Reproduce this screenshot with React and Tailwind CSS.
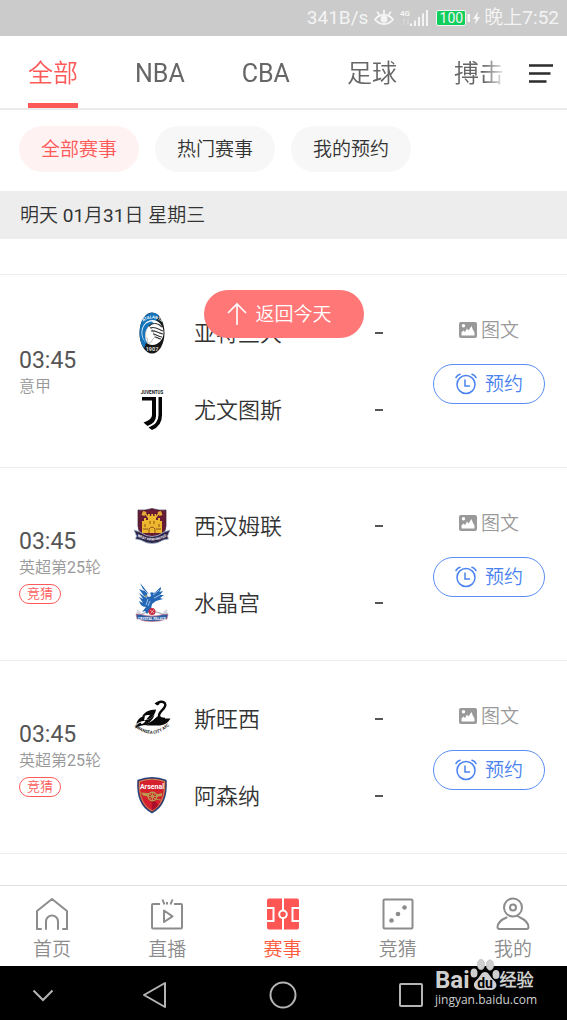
import React from 'react';

function StatusBar() {
  return (
    <header className="flex h-9 shrink-0 items-center justify-end bg-[#cbcbcb] pr-2 text-[19px] leading-6 text-[#f4f4f4]">
      <span>341B/s</span>
      <svg className="ml-1.5 h-5 w-5" viewBox="0 0 20 20" fill="none" stroke="currentColor" strokeWidth="1.8" strokeLinecap="round" aria-hidden="true">
        <path d="M1 11.5C5.5 5.5 14.5 5.5 19 11.5C14.5 17.5 5.5 17.5 1 11.5Z" />
        <circle cx="10" cy="11.2" r="3.4" fill="currentColor" stroke="none" />
        <path d="M10 2.5v3.5M3.5 4.2l2 3M16.5 4.2l-2 3" />
      </svg>
      <svg className="ml-1.5 h-5 w-7" viewBox="0 0 28 20" fill="currentColor" aria-hidden="true">
        <text x="0" y="8" fontSize="8" fontWeight="700">4G</text>
        <path d="M2.5 12l1.5-1.5 1.5 1.500h-1v5h-1v-5zM6.500 15.500h1v-5h1v5h1l-1.500 1.500z" opacity=".4" />
        <path d="M10 15.500h2v2.500h-2zM14 12.500h2v5.500h-2zM18 9h2v9h-2zM22 5.500h2V18h-2zM26 2h2v16h-2z" />
      </svg>
      <span className="ml-2 flex h-4 w-[30px] items-center justify-center rounded-xs border border-[#f4f4f4] bg-[#11cf5c] text-sm">100</span>
      <svg className="h-4 w-4" viewBox="0 0 16 16" fill="currentColor" aria-hidden="true">
        <path d="M1.500 4h2.500v8H1.500zM12 1.500L7 9h2.800L9 14.500 14 7h-2.800z" />
      </svg>
      <span className="ml-0.5">晚上7:52</span>
    </header>
  );
}

const tabs = ['全部', 'NBA', 'CBA', '足球', '搏击'];

function Tabs() {
  return (
    <nav className="flex h-[74px] shrink-0 border-b-2 border-[#ebebeb]" aria-label="分类">
      <div className="flex min-w-0 flex-1 gap-[57px] overflow-hidden pl-7 [mask-image:linear-gradient(to_right,black_calc(100%-32px),transparent_calc(100%-8px))]">
        {tabs.map((tab, i) => (
          <button
            key={tab}
            className={
              i === 0
                ? 'shrink-0 border-b-[5px] border-[#fe5959] pt-2 text-[25px] leading-8 text-[#fe5959]'
                : 'shrink-0 border-b-[5px] border-transparent pt-2 text-[25px] leading-8 text-[#666]'
            }
          >
            {tab}
          </button>
        ))}
      </div>
      <button className="flex w-[52px] shrink-0 items-center justify-center pt-1" aria-label="菜单">
        <svg className="h-6 w-6" viewBox="0 0 24 24" stroke="#2c2c2c" strokeWidth="2.300" aria-hidden="true">
          <path d="M0 3.500h24M0 11.500h21.500M0 19.500h17.500" />
        </svg>
      </button>
    </nav>
  );
}

const filters = ['全部赛事', '热门赛事', '我的预约'];

function Filters() {
  return (
    <div className="flex h-[81px] shrink-0 items-center gap-4 px-[19px] pb-[3px]">
      {filters.map((filter, i) => (
        <button
          key={filter}
          className={
            i === 0
              ? 'h-[46px] w-[120px] rounded-full bg-[#fff2f2] pt-0.5 text-[19px] leading-7 text-[#fe5959]'
              : 'h-[46px] w-[120px] rounded-full bg-[#f7f7f7] pt-0.5 text-[19px] leading-7 text-[#333]'
          }
        >
          {filter}
        </button>
      ))}
    </div>
  );
}

function AtalantaCrest() {
  return (
    <svg className="h-11 w-10" viewBox="0 0 40 44" aria-hidden="true">
      <ellipse cx="20" cy="22" rx="12.500" ry="20.500" fill="#171717" />
      <path d="M27 4.500C22 0 15 .8 10.500 9C6 18 7 31 12 37.500L18 22Z" fill="#1475bd" />
      <ellipse cx="20.500" cy="21.500" rx="11" ry="12.500" fill="#fff" />
      <path d="M20 10.500C8 11 8 28 15.500 32.500C10.500 25 13 15 22 12.500Z" fill="#1475bd" />
      <path d="M17 15C13 19 14 23 13 26l2.500 1.500L15 31c2.500 2 5 1 5-2l3-3-3-8Z" fill="#fff" stroke="#777" strokeWidth=".5" />
      <path d="M17 15c4-4 9-3 13 1M18 17c5-2 8 1 13 3M19 20c4-1 7 2 12 3M21 23c3 0 5 3 9 3M23 26c2 0 3 2 6 2" fill="none" stroke="#333" strokeWidth="1.100" />
      <path id="atalanta-arc" d="M9 12.500Q20 2 32 13" fill="none" />
      <text fontSize="4" fontWeight="700" fill="#fff" textAnchor="middle"><textPath href="#atalanta-arc" startOffset="50%">ATALANTA</textPath></text>
      <text x="20" y="39.500" textAnchor="middle" fontSize="5.500" fontWeight="700" fill="#ddd">1907</text>
    </svg>
  );
}

function JuventusCrest() {
  return (
    <svg className="h-11 w-10" viewBox="0 0 40 44" aria-hidden="true">
      <text x="20" y="6" textAnchor="middle" fontSize="4.500" fontWeight="700" fill="#111">JUVENTUS</text>
      <path d="M10 9h14v19q0 7-8.500 10l-4-3.500Q20 32 20 27V12.500H10Z" fill="#050505" />
      <path d="M26.500 9H30v18q0 11-10 15l-3.500-2.500Q26.500 36 26.500 27Z" fill="#050505" />
    </svg>
  );
}

function WestHamCrest() {
  return (
    <svg className="h-11 w-10" viewBox="0 0 40 44" aria-hidden="true">
      <path d="M6 6Q13 7 20 4.500Q27 7 34 6v16q0 9-14 15Q6 31 6 22Z" fill="#671b34" stroke="#35213c" strokeWidth=".7" />
      <path d="M12 8l16 20M28 8L12 28" stroke="#e4ad35" strokeWidth="1.500" />
      <path d="M11 7l3.500 1-2 4-3-1ZM29 7l-3.500 1 2 4 3-1Z" fill="#e4ad35" />
      <path d="M10 29V17h2v-3h2v2h2v-6h1.800v2h1.500v-2h1.800v2h1.500v-2H24v6h2v-2h2v3h2v12Z" fill="#edb82d" />
      <path d="M17 29v-4q3-4 6 0v4M13 20v3M27 20v3M18 17v3M22 17v3M11 25h5M24 25h5" fill="none" stroke="#875022" strokeWidth="1" />
      <path d="M2 26l6 2q12 9 24 0l6-2-2.500 6 1 3-5 1q-11.500 7-23 0l-5-1 1-3Z" fill="#302649" stroke="#a0b9ce" strokeWidth=".8" />
      <path id="westham-arc" d="M2 30Q20 43 38 30" fill="none" />
      <text fontSize="3.500" fontWeight="700" fill="#fff" textAnchor="middle"><textPath href="#westham-arc" startOffset="50%">WEST HAM UNITED</textPath></text>
    </svg>
  );
}

function PalaceCrest() {
  return (
    <svg className="h-11 w-10" viewBox="0 0 40 44" aria-hidden="true">
      <path d="M5 28l3 2 2 4h20l2-4 3-2 1 8H4Z" fill="#d7dce2" />
      <path d="M8 34q12-7 24 0" fill="none" stroke="#afb8c5" strokeWidth="1.500" />
      <path d="M8 2c4 4 6 8 9 11q2-3 5-1c2-1 5-5 7-6 0 3-1 4-2 5l4-1-3 4 4 0-4 3 3 1-7 2-4 3-1 5-4 5-2-3-3 1 4-5c-4 0-6-3-7-6l4 2-4-6 4 2-4-6 5 3-5-7 5 2Z" fill="#2367b5" />
      <path d="M10 7l7 7M9 13l6 4M27 9l-6 5M28 14l-6 3M16 18l-2 6M18 20l-2 5" stroke="#a9c9ec" strokeWidth=".9" />
      <circle cx="17" cy="14" r="2" fill="#eef3f9" />
      <path d="M15 14l-2.500 1 2 1Z" fill="#e9ae33" />
      <circle cx="20" cy="30.500" r="3.500" fill="#c92b3d" />
      <path d="M18 29l4 3M22 28.500l-3.500 4" stroke="#f4c7ca" strokeWidth=".7" />
      <path d="M4 33l5 .5q11 3.500 22 0l5-.5-1 5q-15 5-30 0Z" fill="#285ea8" stroke="#df6e79" strokeWidth=".6" />
      <text x="20" y="38.600" textAnchor="middle" fontSize="3.400" fontWeight="700" fill="#fff">CRYSTAL PALACE</text>
    </svg>
  );
}

function SwanseaCrest() {
  return (
    <svg className="h-11 w-10" viewBox="0 0 40 44" aria-hidden="true">
      <path d="M25 7.500C26 4.500 31 3.500 33 6.500C35.500 11 26.500 14 27 19C27.300 21 29.500 22 33 22" fill="none" stroke="#080808" strokeWidth="2.400" />
      <path d="M22.500 6.500l3-2 2 2.500-2 1.500Z" fill="#080808" />
      <path d="M26 19c1 2 4 2.500 12.500 2.500C36 26 32 28.500 26 28.500H13.500c4-1 5.500-2.500 7.500-5Z" fill="#080808" />
      <path d="M24 12.500C17 12.500 11.500 15.500 10 20c3-2 6-2.200 8-2-1.500 2-2.500 3-4 4.500 5 0 9-4 10-10Z" fill="#080808" />
      <path d="M13 18.500C8 20 5 23 4.500 27c3-2.500 6-3 9-3-1 1.500-2 2.500-4 3.500C15 27.500 21 24 22.500 17.500 20 21 16.500 23 12 23.500Z" fill="#080808" />
      <path d="M8.500 25.500C5 27 3.500 29 3.500 31.500c3-3 7-3.500 11-3.500 5 0 9-3.500 10.500-8.500-4 5-9 7-15.500 7.500Z" fill="#080808" />
      <path id="swansea-arc" d="M0 27Q20 47 40 26" fill="none" />
      <text fontSize="4.300" fontWeight="700" fill="#222" textAnchor="middle"><textPath href="#swansea-arc" startOffset="50%">SWANSEA CITY AFC</textPath></text>
    </svg>
  );
}

function ArsenalCrest() {
  return (
    <svg className="h-11 w-10" viewBox="0 0 40 44" aria-hidden="true">
      <path d="M6 6.500Q20 1 34 6.500C35 22 31 33 20 38.500C9 33 5 22 6 6.500Z" fill="#d4212d" stroke="#244778" strokeWidth="1.400" />
      <path d="M7.500 7.500Q20 3 32.500 7.500C33 21 30 31 20 36.800C10 31 7 21 7.500 7.500Z" fill="none" stroke="#c5a567" strokeWidth=".8" />
      <path d="M19.500 24l7 7q-3 4-6.500 5.500Z" fill="#a90f2a" />
      <path d="M9 18.500l17 1.500 4-1v3l-10 1.500-9-2Z" fill="#b99a4e" />
      <circle cx="20.500" cy="22.500" r="4.300" fill="#cf2730" stroke="#b99a4e" strokeWidth="1.400" />
      <path d="M16.500 22.500h8M20.500 18.500v8M17.500 19.500l6 6M23.500 19.500l-6 6M23 25l6 1" stroke="#b99a4e" strokeWidth=".9" />
      <text x="20" y="14.500" textAnchor="middle" fontSize="7" fontWeight="700" fill="#fff">Arsenal</text>
    </svg>
  );
}

const matches = [
  { time: '03:45', league: '意甲', guess: false, teams: [['亚特兰大', AtalantaCrest], ['尤文图斯', JuventusCrest]] },
  { time: '03:45', league: '英超第25轮', guess: true, teams: [['西汉姆联', WestHamCrest], ['水晶宫', PalaceCrest]] },
  { time: '03:45', league: '英超第25轮', guess: true, teams: [['斯旺西', SwanseaCrest], ['阿森纳', ArsenalCrest]] },
];

function Match({ match }) {
  return (
    <li className="flex items-center border-t border-[#ececec] py-[19px] pr-[22px] pl-[19px]">
      <div className="flex w-[113px] shrink-0 flex-col items-start pt-1">
        <span className="text-[23px] leading-7 text-[#555]">{match.time}</span>
        <span className="text-base leading-6 text-[#999]">{match.league}</span>
        {match.guess && (
          <span className="mt-1 flex h-5 w-[42px] items-center justify-center rounded-full border border-[#fe5959] text-[13px] leading-4 text-[#fe5959]">竞猜</span>
        )}
      </div>
      <div className="min-w-0 flex-1">
        {match.teams.map(([name, Crest]) => (
          <div key={name} className="flex h-[77px] items-center">
            <Crest />
            <span className="ml-[22px] flex-1 pt-0.5 text-[22px] leading-8 text-[#333]">{name}</span>
            <span className="mr-[50px] h-0.5 w-2 bg-[#555]" role="img" aria-label="未开赛" />
          </div>
        ))}
      </div>
      <div className="flex w-28 shrink-0 flex-col items-center gap-5 pb-5">
        <a href="#news" className="flex items-center gap-1 text-[19px] leading-[26px] text-[#999]">
          <svg className="h-[18px] w-[18px]" viewBox="0 0 18 18" aria-hidden="true">
            <rect y="0" width="18" height="16" rx="2" fill="#999" />
            <circle cx="4.500" cy="3.800" r="1.700" fill="#fff" />
            <path d="M2.500 13.500v-3l2-2 1.500 1.500 2-3.500 1.500 2 3-4.500 1.500 4 1.500 2.500v3Z" fill="#fff" />
          </svg>
          图文
        </a>
        <button className="flex h-10 w-full items-center justify-center gap-2 rounded-full border border-[#5a8df5] text-[19px] leading-6 text-[#4a82f0]">
          <svg className="h-[22px] w-[22px]" viewBox="0 0 22 22" fill="none" stroke="currentColor" strokeWidth="1.500" strokeLinecap="round" aria-hidden="true">
            <circle cx="11" cy="11.500" r="9" />
            <path d="M10 7v6h4.500M1 4.500Q2.500 2 5 1.200M21 4.500Q19.500 2 17 1.200" />
          </svg>
          <span className="pt-0.5">预约</span>
        </button>
      </div>
    </li>
  );
}

const HomeIcon = () => (
  <svg className="h-9 w-9" viewBox="0 0 36 36" fill="none" stroke="currentColor" strokeWidth="2" strokeLinejoin="round" strokeLinecap="round" aria-hidden="true">
    <path d="M7 33H3V15L18 3l15 12v18h-4M12 33V25.500a6 6 0 0 1 12 0V33" />
  </svg>
);
const LiveIcon = () => (
  <svg className="h-9 w-9" viewBox="0 0 36 36" fill="none" stroke="currentColor" strokeWidth="2" strokeLinejoin="round" aria-hidden="true">
    <path d="M11 8H4q-1 0-1 1v22q0 1.500 1 1.500h28q1 0 1-1.500V9q0-1-1-1h-7M13.500 3.500l2 5M18 6v2.500M23.500 3.500l-2 5M15 14.500v11.500l8.500-5.700Z" />
  </svg>
);
const MatchIcon = () => (
  <svg className="h-9 w-9" viewBox="0 0 36 36" fill="none" aria-hidden="true">
    <rect x="2" y="2.500" width="32" height="31" rx="2" fill="#fe5555" />
    <path d="M18 2v12.500M18 22v12M2 12h6.500v13H2M34 12h-6.500v13H34" stroke="#fff" strokeWidth="2" />
    <circle cx="18" cy="18.300" r="3.800" stroke="#fff" strokeWidth="2" />
  </svg>
);
const GuessIcon = () => (
  <svg className="h-9 w-9" viewBox="0 0 36 36" fill="none" stroke="currentColor" strokeWidth="2" aria-hidden="true">
    <rect x="3.500" y="3.500" width="29" height="29" rx="1" />
    <g fill="currentColor" stroke="none"><circle cx="11.500" cy="24.500" r="2.300" /><circle cx="18" cy="18" r="2.300" /><circle cx="24.500" cy="11.500" r="2.300" /></g>
  </svg>
);
const MeIcon = () => (
  <svg className="h-9 w-9" viewBox="0 0 36 36" fill="none" stroke="currentColor" strokeWidth="2" strokeLinecap="round" aria-hidden="true">
    <circle cx="18" cy="11.500" r="9" />
    <circle cx="18" cy="11.500" r="3" />
    <path d="M11.500 21.500Q3 25 2.500 31q0 2 2 2h27q2 0 2-2Q33 25 25 21.500q-2-1.500-3-1.500" />
  </svg>
);

const navItems = [
  ['首页', HomeIcon],
  ['直播', LiveIcon],
  ['赛事', MatchIcon],
  ['竞猜', GuessIcon],
  ['我的', MeIcon],
];

function BottomNav() {
  return (
    <nav className="flex h-[81px] shrink-0 justify-between border-t border-[#dfdfdf] bg-white pr-[26px] pl-6" aria-label="主导航">
      {navItems.map(([label, Icon]) => (
        <a
          key={label}
          href={'#' + label}
          className={
            label === '赛事'
              ? 'flex w-14 flex-col items-center gap-1 pt-2.5 text-[19px] leading-7 text-[#fe5a3c]'
              : 'flex w-14 flex-col items-center gap-1 pt-2.5 text-[19px] leading-7 text-[#8c8c8c]'
          }
        >
          <Icon />
          {label}
        </a>
      ))}
    </nav>
  );
}

function SystemBar() {
  return (
    <footer className="relative flex h-[54px] shrink-0 items-center bg-black pt-1 text-[#b5b5b5]">
      <div className="grid w-full grid-cols-[86px_138px_118px_138px_1fr] items-center justify-items-center">
        <button aria-label="收起">
          <svg className="h-7 w-7" viewBox="0 0 28 28" fill="none" stroke="currentColor" strokeWidth="2" aria-hidden="true"><path d="M4.500 9.500l9.500 9.500 9.500-9.500" /></svg>
        </button>
        <button aria-label="返回">
          <svg className="h-7 w-7" viewBox="0 0 28 28" fill="none" stroke="currentColor" strokeWidth="2" strokeLinejoin="round" aria-hidden="true"><path d="M24 2v24L3 14Z" /></svg>
        </button>
        <button aria-label="主屏幕">
          <svg className="h-7 w-7" viewBox="0 0 28 28" fill="none" stroke="currentColor" strokeWidth="2" aria-hidden="true"><circle cx="14" cy="14" r="12.500" /></svg>
        </button>
        <button aria-label="最近任务">
          <svg className="h-7 w-7" viewBox="0 0 28 28" fill="none" stroke="currentColor" strokeWidth="2" aria-hidden="true"><rect x="3" y="3" width="22" height="22" rx="1" /></svg>
        </button>
      </div>
      <div className="absolute right-[30px] bottom-3 flex w-[102px] flex-col text-[#cfcfcf]">
        <div className="flex items-end">
          <span className="font-[Roboto] text-2xl leading-6 font-bold">Bai</span>
          <svg className="h-[34px] w-[30px] shrink-0" viewBox="0 0 30 34" fill="#cfcfcf" aria-hidden="true">
            <ellipse cx="4" cy="15" rx="3.500" ry="4.500" />
            <ellipse cx="11" cy="6.500" rx="3.700" ry="5.200" stroke="#bbb" strokeWidth=".6" />
            <ellipse cx="20" cy="7" rx="3.700" ry="5.200" stroke="#bbb" strokeWidth=".6" />
            <ellipse cx="26" cy="16.500" rx="3.500" ry="4.500" />
            <path d="M15 14c4 0 5 5 8.500 8 6 5 2 10.500-3.500 10-3-.5-6-.5-9 0-6 .5-10-5-4.500-10 4-3.500 4.500-8 8.500-8Z" />
            <text x="15" y="29.500" textAnchor="middle" fontSize="14" fontWeight="700" fill="#000" fontFamily="Roboto">du</text>
          </svg>
          <span className="text-[17px] leading-6 font-bold">经验</span>
        </div>
        <span className="font-['Open_Sans'] text-xs leading-4 font-medium">jingyan.baidu.com</span>
      </div>
    </footer>
  );
}

export default function App() {
  return (
    <div className="flex min-h-screen flex-col bg-white font-[Roboto,'Noto_Sans_CJK_SC_DemiLight','Noto_Sans_CJK_SC',sans-serif]">
      <StatusBar />
      <Tabs />
      <Filters />
      <h1 className="flex h-12 shrink-0 items-center bg-[#ededed] px-5 pt-0.5 text-[19px] leading-7 text-[#333]">明天 01月31日 星期三</h1>
      <main className="relative flex-1 pt-[35px]">
        <ul className="border-b border-[#ececec]">
          {matches.map((match, i) => (
            <Match key={i} match={match} />
          ))}
        </ul>
        <button className="absolute top-[51px] left-1/2 flex h-12 w-40 -translate-x-1/2 items-center justify-center gap-2 rounded-full bg-[#ff7777] pr-2 text-[19px] leading-7 text-white">
          <svg className="h-6 w-5" viewBox="0 0 20 24" fill="none" stroke="currentColor" strokeWidth="1.600" aria-hidden="true">
            <path d="M10 23V2M1 11l9-9 9 9" />
          </svg>
          <span className="pt-0.5">返回今天</span>
        </button>
      </main>
      <BottomNav />
      <SystemBar />
    </div>
  );
}
